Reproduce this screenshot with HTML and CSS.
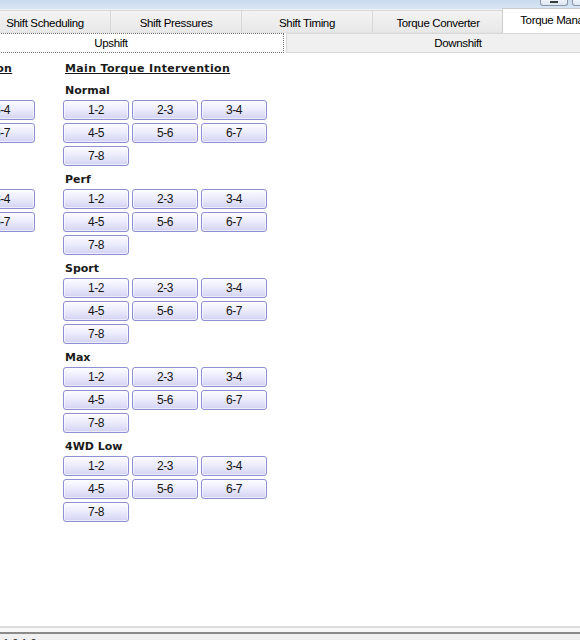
FILE: index.html
```html
<!DOCTYPE html>
<html>
<head>
<meta charset="utf-8">
<title>Torque Management</title>
<link rel="stylesheet" href="styles.css">
</head>
<body>
<div class="window">
  <div class="titlebar">
    <div class="wbtn"><span class="wglyph"></span></div>
    <div class="wbtn"></div>
  </div>
  <div class="tabs">
    <div class="tab">Shift Scheduling</div>
    <div class="tab">Shift Pressures</div>
    <div class="tab">Shift Timing</div>
    <div class="tab">Torque Converter</div>
    <div class="tab tab-active">Torque Management</div>
  </div>
  <div class="subtabs">
    <div class="subtab subtab-active">Upshift</div>
    <div class="subtab">Downshift</div>
  </div>
  <div class="content">
    <div class="column column-left">
      <div class="col-title col-title-left">Upshift Torque Intervention</div>
      <div class="section">
        <div class="section-title">Normal</div>
        <div class="grid">
          <div class="gear-btn">1-2</div><div class="gear-btn">2-3</div><div class="gear-btn">3-4</div>
          <div class="gear-btn">4-5</div><div class="gear-btn">5-6</div><div class="gear-btn">6-7</div>
        </div>
      </div>
      <div class="section">
        <div class="section-title">Perf</div>
        <div class="grid">
          <div class="gear-btn">1-2</div><div class="gear-btn">2-3</div><div class="gear-btn">3-4</div>
          <div class="gear-btn">4-5</div><div class="gear-btn">5-6</div><div class="gear-btn">6-7</div>
        </div>
      </div>
    </div>
    <div class="column">
      <div class="col-title">Main Torque Intervention</div>
      <div class="section">
        <div class="section-title">Normal</div>
        <div class="grid">
          <div class="gear-btn">1-2</div><div class="gear-btn">2-3</div><div class="gear-btn">3-4</div>
          <div class="gear-btn">4-5</div><div class="gear-btn">5-6</div><div class="gear-btn">6-7</div>
          <div class="gear-btn">7-8</div>
        </div>
      </div>
      <div class="section">
        <div class="section-title">Perf</div>
        <div class="grid">
          <div class="gear-btn">1-2</div><div class="gear-btn">2-3</div><div class="gear-btn">3-4</div>
          <div class="gear-btn">4-5</div><div class="gear-btn">5-6</div><div class="gear-btn">6-7</div>
          <div class="gear-btn">7-8</div>
        </div>
      </div>
      <div class="section">
        <div class="section-title">Sport</div>
        <div class="grid">
          <div class="gear-btn">1-2</div><div class="gear-btn">2-3</div><div class="gear-btn">3-4</div>
          <div class="gear-btn">4-5</div><div class="gear-btn">5-6</div><div class="gear-btn">6-7</div>
          <div class="gear-btn">7-8</div>
        </div>
      </div>
      <div class="section">
        <div class="section-title">Max</div>
        <div class="grid">
          <div class="gear-btn">1-2</div><div class="gear-btn">2-3</div><div class="gear-btn">3-4</div>
          <div class="gear-btn">4-5</div><div class="gear-btn">5-6</div><div class="gear-btn">6-7</div>
          <div class="gear-btn">7-8</div>
        </div>
      </div>
      <div class="section">
        <div class="section-title">4WD Low</div>
        <div class="grid">
          <div class="gear-btn">1-2</div><div class="gear-btn">2-3</div><div class="gear-btn">3-4</div>
          <div class="gear-btn">4-5</div><div class="gear-btn">5-6</div><div class="gear-btn">6-7</div>
          <div class="gear-btn">7-8</div>
        </div>
      </div>
    </div>
  </div>
  <div class="bottom">
    <div class="statusbar">1.0.1.0</div>
  </div>
</div>
</body>
</html>
```

FILE: styles.css
```css
html, body {
  margin: 0;
  padding: 0;
}
body {
  width: 580px;
  height: 640px;
  overflow: hidden;
  background: #ffffff;
  font-family: "Liberation Sans", Arial, sans-serif;
  color: #000;
}
.window {
  display: flex;
  flex-direction: column;
  width: 580px;
  height: 640px;
  overflow: hidden;
}
.titlebar {
  flex: none;
  height: 9px;
  box-sizing: border-box;
  padding-left: 540px;
  display: flex;
  gap: 4px;
  background: linear-gradient(#cbdbee, #d8e5f4);
  overflow: hidden;
}
.wbtn {
  flex: none;
  width: 28px;
  height: 6px;
  box-sizing: border-box;
  border: 1px solid #8a97a8;
  border-top: none;
  border-radius: 0 0 3px 3px;
  background: linear-gradient(#eef3f9, #dde7f2);
  display: flex;
  justify-content: center;
}
.wglyph {
  width: 8px;
  height: 2px;
  margin-top: 1px;
  background: #3a3a3a;
}
.tabs {
  flex: none;
  height: 24px;
  display: flex;
  align-items: flex-end;
  margin-left: -20px;
  background: #f0f0f0;
}
.tab {
  flex: none;
  width: 131px;
  height: 23px;
  box-sizing: border-box;
  border: 1px solid #d9d9d9;
  border-left: none;
  border-bottom: 1px solid #e3e3e3;
  background: linear-gradient(#f3f3f3, #e8e8e8);
  display: flex;
  align-items: center;
  justify-content: center;
  padding-top: 2px;
  font-size: 11.5px;
  letter-spacing: -0.35px;
  white-space: nowrap;
  overflow: hidden;
}
.tab-active {
  width: 136px;
  height: 25px;
  margin-left: -2px;
  background: #ffffff;
  border: 1px solid #cccccc;
  border-bottom: none;
  align-items: flex-start;
  padding-top: 5px;
}
.subtabs {
  flex: none;
  height: 21px;
  display: flex;
  gap: 2px;
  margin-left: -62px;
  background: #ffffff;
}
.subtab {
  flex: none;
  width: 344px;
  height: 20px;
  box-sizing: border-box;
  display: flex;
  align-items: center;
  justify-content: center;
  font-size: 11.5px;
  letter-spacing: -0.35px;
  background: #f0f0f0;
  border: 1px solid #d8d8d8;
}
.subtab-active {
  width: 346px;
  background: #ffffff;
  border: 1px dotted #6f6f6f;
}
.content {
  flex: 1;
  min-height: 0;
  display: flex;
  gap: 28px;
  margin-left: -169px;
  padding-top: 8px;
  background: #ffffff;
  overflow: hidden;
}
.column {
  flex: none;
  width: 204px;
  display: flex;
  flex-direction: column;
}
.col-title {
  font-family: "DejaVu Sans", Verdana, sans-serif;
  font-weight: bold;
  font-size: 11px;
  line-height: 13px;
  letter-spacing: 0.35px;
  text-decoration: underline;
  padding-left: 2px;
  margin-bottom: 9px;
  white-space: nowrap;
  color: #1a1a1a;
}
.col-title-left {
  padding-left: 0;
}
.section {
  display: flex;
  flex-direction: column;
  gap: 2px;
  margin-bottom: 7px;
}
.section-title {
  font-family: "DejaVu Sans", Verdana, sans-serif;
  font-weight: bold;
  font-size: 11px;
  line-height: 14px;
  padding-left: 2px;
  color: #1a1a1a;
}
.grid {
  display: grid;
  grid-template-columns: repeat(3, 66px);
  grid-auto-rows: 20px;
  gap: 3px;
  height: 66px;
}
.gear-btn {
  box-sizing: border-box;
  border: 1px solid #8f8fd4;
  border-radius: 3px;
  background: linear-gradient(#fcfcff, #ececfc 45%, #d3d3f3);
  box-shadow: inset 0 0 0 1px rgba(255, 255, 255, 0.55);
  display: flex;
  align-items: center;
  justify-content: center;
  font-family: "Liberation Sans", Arial, sans-serif;
  font-size: 12px;
  letter-spacing: -0.5px;
  color: #141414;
}
.bottom {
  flex: none;
  height: 14px;
  box-sizing: border-box;
  border-top: 2px solid #dcdcdc;
  background: #f8f8f8;
  display: flex;
  flex-direction: column;
  overflow: hidden;
}
.statusbar {
  margin-top: 4px;
  border-top: 2px solid #8a8a8a;
  padding: 3px 0 0 3px;
  font-size: 11px;
  line-height: 13px;
  color: #222;
  background: #f0f0f0;
}
```
